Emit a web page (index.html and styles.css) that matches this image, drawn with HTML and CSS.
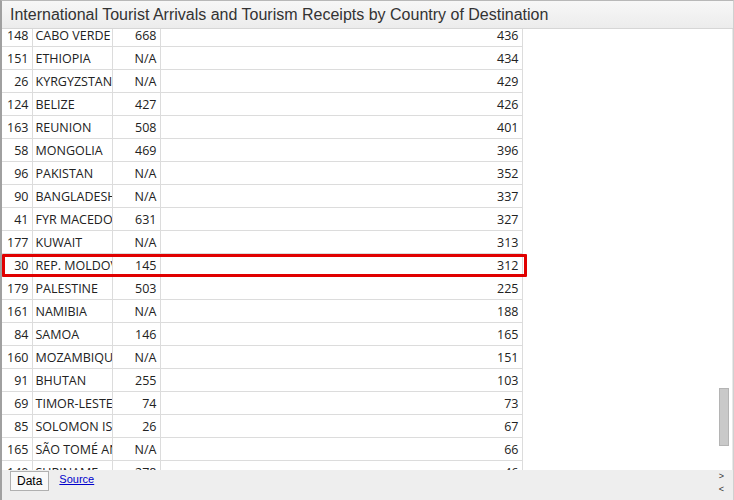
FILE: index.html
```html
<!DOCTYPE html>
<html>
<head>
<meta charset="utf-8">
<link rel="stylesheet" href="styles.css">
</head>
<body>
<div class="frame">
  <div class="title">International Tourist Arrivals and Tourism Receipts by Country of Destination</div>
  <div class="content">
    <div class="scroll">
      <table class="grid">
        <colgroup><col class="c1"><col class="c2"><col class="c3"><col class="c4"></colgroup>
        <tbody>
          <tr><td class="num">148</td><td>CABO VERDE</td><td class="num">668</td><td class="num">436</td></tr>
          <tr><td class="num">151</td><td>ETHIOPIA</td><td class="num">N/A</td><td class="num">434</td></tr>
          <tr><td class="num">26</td><td>KYRGYZSTAN</td><td class="num">N/A</td><td class="num">429</td></tr>
          <tr><td class="num">124</td><td>BELIZE</td><td class="num">427</td><td class="num">426</td></tr>
          <tr><td class="num">163</td><td>REUNION</td><td class="num">508</td><td class="num">401</td></tr>
          <tr><td class="num">58</td><td>MONGOLIA</td><td class="num">469</td><td class="num">396</td></tr>
          <tr><td class="num">96</td><td>PAKISTAN</td><td class="num">N/A</td><td class="num">352</td></tr>
          <tr><td class="num">90</td><td>BANGLADESH</td><td class="num">N/A</td><td class="num">337</td></tr>
          <tr><td class="num">41</td><td>FYR MACEDONIA</td><td class="num">631</td><td class="num">327</td></tr>
          <tr><td class="num">177</td><td>KUWAIT</td><td class="num">N/A</td><td class="num">313</td></tr>
          <tr><td class="num">30</td><td>REP. MOLDOVA</td><td class="num">145</td><td class="num">312</td></tr>
          <tr><td class="num">179</td><td>PALESTINE</td><td class="num">503</td><td class="num">225</td></tr>
          <tr><td class="num">161</td><td>NAMIBIA</td><td class="num">N/A</td><td class="num">188</td></tr>
          <tr><td class="num">84</td><td>SAMOA</td><td class="num">146</td><td class="num">165</td></tr>
          <tr><td class="num">160</td><td>MOZAMBIQUE</td><td class="num">N/A</td><td class="num">151</td></tr>
          <tr><td class="num">91</td><td>BHUTAN</td><td class="num">255</td><td class="num">103</td></tr>
          <tr><td class="num">69</td><td>TIMOR-LESTE</td><td class="num">74</td><td class="num">73</td></tr>
          <tr><td class="num">85</td><td>SOLOMON ISLANDS</td><td class="num">26</td><td class="num">67</td></tr>
          <tr><td class="num">165</td><td>SÃO TOMÉ AND PRINCIPE</td><td class="num">N/A</td><td class="num">66</td></tr>
          <tr><td class="num">140</td><td>SURINAME</td><td class="num">278</td><td class="num">46</td></tr>
        </tbody>
      </table>
      <div class="highlight"></div>
    </div>
    <div class="vscroll"><div class="thumb"></div></div>
  </div>
  <div class="tabs">
    <span class="tab">Data</span>
    <a class="link" href="#">Source</a>
    <div class="arrows"><span>&gt;</span><span>&lt;</span></div>
  </div>
</div>
</body>
</html>
```

FILE: styles.css
```css
html, body {
  margin: 0;
  padding: 0;
  background: #fff;
}
.frame {
  width: 734px;
  height: 500px;
  box-sizing: border-box;
  border-left: 2px solid #a0a0a0;
  border-top: 1px solid #b8b8b8;
  border-right: 1px solid #d0d0d0;
  display: flex;
  flex-direction: column;
  overflow: hidden;
}
.title {
  height: 28px;
  flex: none;
  box-sizing: border-box;
  background: linear-gradient(#f7f7f7, #ececec);
  border-bottom: 1px solid #d6d6d6;
  font-family: "Liberation Sans", Arial, sans-serif;
  font-size: 16px;
  color: #333;
  padding-left: 8px;
  line-height: 28px;
}
.content {
  flex: 1;
  display: flex;
  min-height: 0;
}
.scroll {
  flex: 1;
  position: relative;
  overflow: hidden;
}
.grid {
  border-collapse: collapse;
  table-layout: fixed;
  width: 520px;
  margin-top: -5px;
  font-family: "Open Sans", "Noto Sans", sans-serif;
  font-size: 12.5px;
  color: #222;
}
.c1 { width: 30px; }
.c2 { width: 80px; }
.c3 { width: 48px; }
.c4 { width: 362px; }
.grid td {
  height: 22px;
  padding: 1px 3px 0;
  box-sizing: border-box;
  border-bottom: 1px solid #dcdcdc;
  border-right: 1px solid #dcdcdc;
  white-space: nowrap;
  overflow: hidden;
  text-overflow: clip;
  line-height: 21px;
}
.grid td.num {
  text-align: right;
}
.highlight {
  position: absolute;
  left: 0;
  top: 225px;
  width: 519px;
  height: 17px;
  border: 3px solid #e00000;
  border-radius: 1px;
}
.vscroll {
  width: 14px;
  flex: none;
  border-right: 1px solid #e8e8e8;
}
.thumb {
  margin-top: 359px;
  margin-left: 1px;
  width: 8px;
  height: 56px;
  background: #c9c9c9;
  border: 1px solid #b4b4b4;
}
.tabs {
  height: 30px;
  flex: none;
  background: #eeeeee;
  display: flex;
  align-items: flex-start;
  position: relative;
  font-family: "Liberation Sans", Arial, sans-serif;
  font-size: 12px;
}
.tab {
  margin-left: 8px;
  margin-top: 1px;
  height: 20px;
  box-sizing: border-box;
  padding: 0 6px;
  line-height: 18px;
  border: 1px solid #b0b0b0;
  background: #f9f9f9;
  color: #000;
}
.link {
  margin-left: 10px;
  margin-top: 3px;
  font-size: 11px;
  color: #0000cc;
  text-decoration: underline;
}
.arrows {
  margin-left: auto;
  margin-right: 9px;
  display: flex;
  flex-direction: column;
  font-size: 9px;
  line-height: 13px;
  color: #333;
}
```
